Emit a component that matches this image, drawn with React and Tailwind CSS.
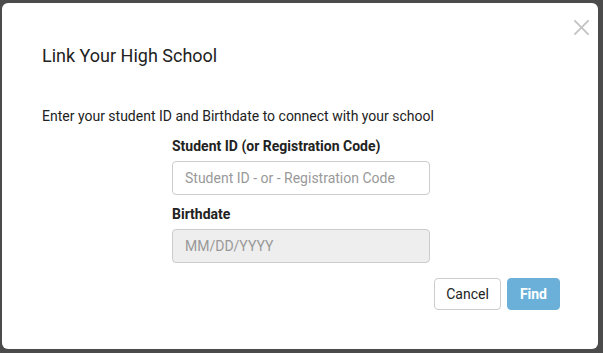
export default function App() {
  return (
    <div className="w-[603px] h-[353px] bg-[#4b4b4b] pt-[3px] pl-[2px] overflow-hidden" style={{ fontFamily: 'Roboto, "Liberation Sans", sans-serif' }}>
      <div className="relative w-[596px] h-[346px] bg-white rounded-[6px] text-[#222]">
        <button className="absolute right-[5px] top-[12px] w-[24px] h-[24px] flex items-center justify-center text-[#c4c4c4]">
          <svg width="15" height="15" viewBox="0 0 16 16" stroke="currentColor" strokeWidth="2" strokeLinecap="square">
            <path d="M1 1 L15 15 M15 1 L1 15" />
          </svg>
        </button>
        <h2 className="pl-[40px] pt-[40px] text-[18px] leading-[26px] font-normal">Link Your High School</h2>
        <p className="pl-[40px] mt-[37px] text-[14px] leading-[20px]">Enter your student ID and Birthdate to connect with your school</p>
        <div className="ml-[170px] w-[258px] mt-[10px]">
          <label className="block text-[14px] leading-[20px] font-bold">Student ID (or Registration Code)</label>
          <input
            className="mt-[5px] w-full h-[34px] border border-[#ccc] rounded-[4px] px-[12px] text-[14px] outline-none placeholder:text-[#999]"
            placeholder="Student ID - or - Registration Code"
          />
          <label className="block mt-[9px] text-[14px] leading-[20px] font-bold">Birthdate</label>
          <input
            disabled
            className="mt-[5px] w-full h-[34px] border border-[#ccc] bg-[#eeeeee] rounded-[4px] px-[12px] text-[14px] outline-none placeholder:text-[#999]"
            placeholder="MM/DD/YYYY"
          />
        </div>
        <div className="flex justify-end gap-[6px] pr-[38px] mt-[15px]">
          <button className="h-[32px] px-[11px] border border-[#ccc] rounded-[4px] bg-white text-[14px] text-[#222]">Cancel</button>
          <button className="h-[32px] px-[12px] border border-[#6ab0d8] rounded-[4px] bg-[#6ab0d8] text-[14px] font-bold text-white">Find</button>
        </div>
      </div>
    </div>
  )
}
